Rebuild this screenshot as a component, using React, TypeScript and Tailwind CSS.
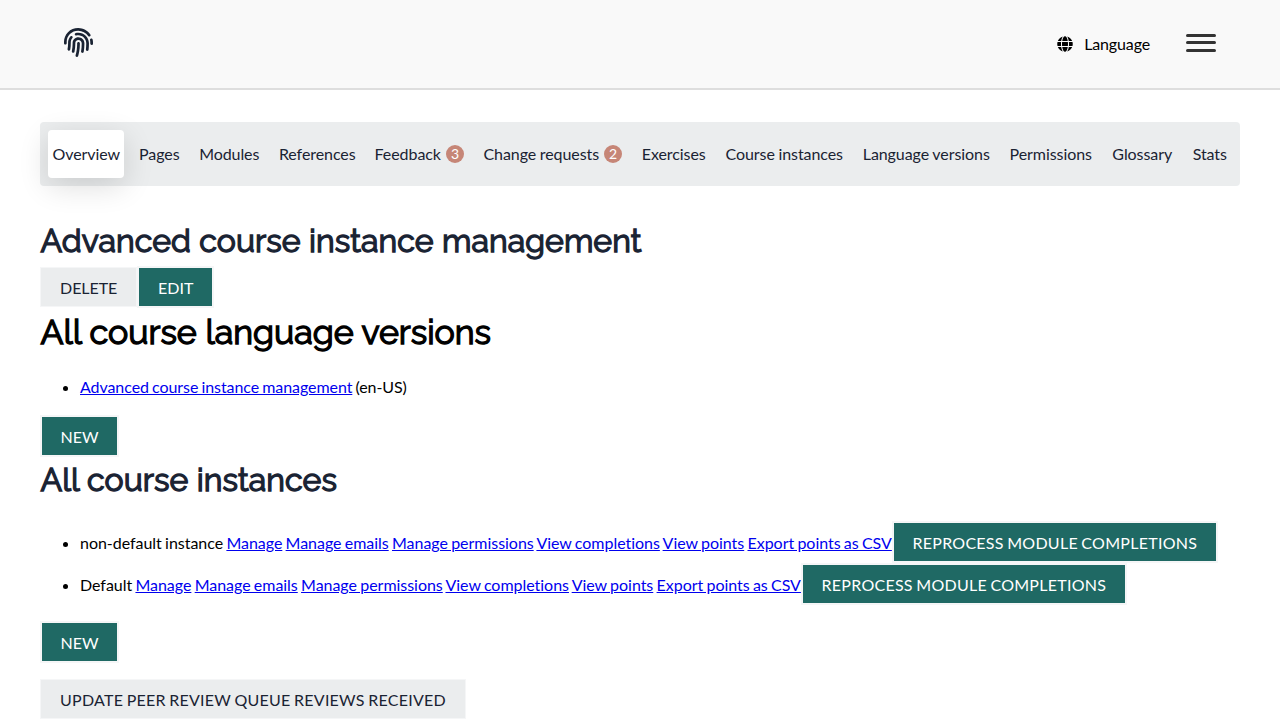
import type { ReactNode } from "react";
import { FaFingerprint, FaGlobe } from "react-icons/fa";

type Tab = { label: string; width: string; count?: number };

const tabs: Tab[] = [
  { label: "Overview", width: "w-[76px]" },
  { label: "Pages", width: "w-[50px]" },
  { label: "Modules", width: "w-[70px]" },
  { label: "References", width: "w-[86px]" },
  { label: "Feedback", width: "w-[98px]", count: 3 },
  { label: "Change requests", width: "w-[149px]", count: 2 },
  { label: "Exercises", width: "w-[73px]" },
  { label: "Course instances", width: "w-[128px]" },
  { label: "Language versions", width: "w-[136px]" },
  { label: "Permissions", width: "w-[93px]" },
  { label: "Glossary", width: "w-[70px]" },
  { label: "Stats", width: "w-[45px]" },
];

const instanceLinks = [
  "Manage",
  "Manage emails",
  "Manage permissions",
  "View completions",
  "View points",
  "Export points as CSV",
];

type ButtonProps = { children: ReactNode; tracking?: string };

function Primary({ children, tracking = "tracking-[0.27px]" }: ButtonProps) {
  return (
    <button
      className={`inline-block border-2 border-[#f5f6f7] bg-[#1f6964] px-[18.6px] pt-[11px] pb-[9px] text-base leading-[18px] text-white uppercase [word-spacing:-0.9px] ${tracking}`}
    >
      {children}
    </button>
  );
}

function Secondary({ children, tracking = "tracking-[0.26px]" }: ButtonProps) {
  return (
    <button
      className={`inline-block border border-[#f5f6f7] bg-[#ebedee] px-[19px] pt-[11px] pb-[9px] text-base leading-[18px] text-[#1a2333] uppercase [word-spacing:-0.9px] ${tracking}`}
    >
      {children}
    </button>
  );
}

function Link({ children }: { children: ReactNode }) {
  return (
    <a href="#" className="text-[#0000ee] underline">
      {children}
    </a>
  );
}

function InstanceRow({ name }: { name: string }) {
  return (
    <li className="h-[42px] leading-[44px] whitespace-nowrap [word-spacing:-0.79px]">
      {name}{" "}
      {instanceLinks.map((label, i) => (
        <span key={label}>
          {i > 0 && " "}
          <Link>{label}</Link>
        </span>
      ))}
      <Primary>Reprocess module completions</Primary>
    </li>
  );
}

export default function App() {
  return (
    <div className="h-[720px] overflow-hidden bg-white font-['Lato',sans-serif] text-base tracking-[-0.03px] text-black [word-spacing:-0.9px]">
      <header className="flex h-[90px] items-center justify-between border-b-2 border-[#dedede] bg-[#f9f9f9] px-16">
        <FaFingerprint className="mb-[3px] size-[29px] text-[#1a2333]" />
        <div className="flex items-center">
          <FaGlobe className="size-4" />
          <span className="ml-[11px] tracking-[-0.14px]">Language</span>
          <div className="mb-[2px] ml-9 flex h-[18px] w-[30px] flex-col">
            <span className="h-[3px] rounded-full bg-[#333]" />
            <span className="mt-1 h-[3px] rounded-full bg-[#333]" />
            <span className="mt-[5px] h-[3px] rounded-full bg-[#333]" />
          </div>
        </div>
      </header>
      <main className="px-10 pt-8">
        <nav className="flex h-16 gap-[10px] rounded bg-[#ebedee] p-2 tracking-[-0.07px] text-[#1a2333] [word-spacing:-0.4px]">
          {tabs.map((tab, i) => (
            <a
              key={tab.label}
              href="#"
              className={`flex shrink-0 items-center justify-center pl-[0.5px] whitespace-nowrap ${tab.width} ${
                i === 0 ? "rounded bg-white shadow-[0_8px_30px_rgba(0,0,0,0.14)]" : ""
              }`}
            >
              {tab.label}
              {tab.count !== undefined && (
                <span className="ml-[5px] flex size-[18px] items-center justify-center rounded-full bg-[#c68677] text-sm text-white">
                  {tab.count}
                </span>
              )}
            </a>
          ))}
        </nav>
        <h1 className="mt-8 h-12 pl-[0.5px] font-['Raleway',sans-serif] text-[32px] leading-[46px] font-normal tracking-[0.08px] text-[#1a2333] [-webkit-text-stroke:1.35px] [word-spacing:normal]">
          Advanced course instance management
        </h1>
        <div className="flex h-[42px] items-center">
          <Secondary tracking="tracking-[-0.04px]">Delete</Secondary>
          <Primary tracking="tracking-[0.1px]">Edit</Primary>
        </div>
        <h2 className="h-[51px] pl-[0.5px] font-['Raleway',sans-serif] text-[34px] leading-[49px] font-normal tracking-[-0.01px] [-webkit-text-stroke:1.35px] [word-spacing:normal]">
          All course language versions
        </h2>
        <ul className="mt-4 list-disc pl-10 leading-6">
          <li className="tracking-[-0.07px]">
            <Link>Advanced course instance management</Link> (en-US)
          </li>
        </ul>
        <div className="mt-4 flex h-[42px]">
          <Primary tracking="tracking-[0px]">New</Primary>
        </div>
        <h2 className="h-12 pl-[0.5px] font-['Raleway',sans-serif] text-[32px] leading-[46px] font-normal tracking-[0.08px] text-[#1a2333] [-webkit-text-stroke:1.35px] [word-spacing:normal]">
          All course instances
        </h2>
        <ul className="mt-4 list-disc pl-10">
          <InstanceRow name="non-default instance" />
          <InstanceRow name="Default" />
        </ul>
        <div className="mt-4 flex h-[42px]">
          <Primary tracking="tracking-[0px]">New</Primary>
        </div>
        <div className="mt-4 flex h-10">
          <Secondary>Update peer review queue reviews received</Secondary>
        </div>
      </main>
    </div>
  );
}
